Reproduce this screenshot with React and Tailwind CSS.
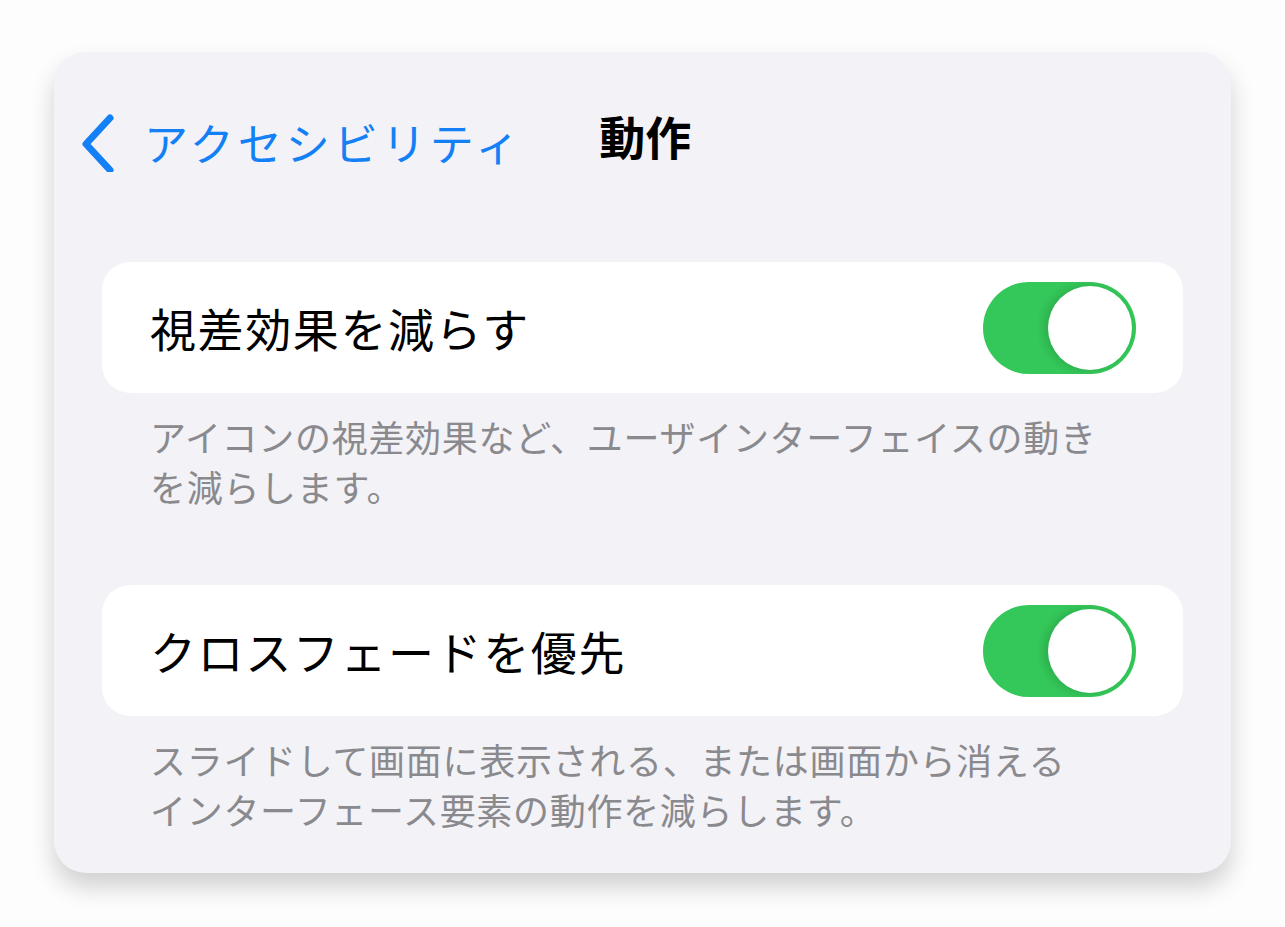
import React from "react";

function Toggle() {
  return (
    <div className="w-[153px] h-[92px] rounded-full bg-[#34c759] flex items-center justify-end pr-[4px]">
      <div className="w-[84px] h-[84px] rounded-full bg-white shadow-[-4px_0_8px_rgba(0,0,0,0.14)]" />
    </div>
  );
}

function Row({ label, note }) {
  return (
    <div>
      <div className="h-[131px] bg-white rounded-[28px] flex items-center justify-between pl-[48px] pr-[47px]">
        <span className="text-[46px] text-black tracking-[1.6px]">{label}</span>
        <Toggle />
      </div>
      <p className="px-[48px] pt-[18px] text-[36px] leading-[50px] text-[#8a8a8e] tracking-[0.7px]">{note}</p>
    </div>
  );
}

export default function App() {
  return (
    <div
      className="w-[1285px] h-[927px] bg-[#fdfdfd] pt-[52px] pl-[54px]"
      style={{ fontFamily: '"Noto Sans CJK JP", "Noto Sans", sans-serif' }}
    >
      <div className="w-[1177px] h-[821px] bg-[#f2f2f7] rounded-[32px] shadow-[0_14px_24px_rgba(0,0,0,0.18)] px-[48px]">
        {/* nav bar */}
        <div className="h-[210px] flex items-start pt-[60px]">
          <div className="flex items-center -ml-[24px]">
            <svg width="40" height="60" viewBox="0 0 40 60" className="mr-[26px]">
              <path d="M32 6 L8 32 L32 58" fill="none" stroke="#1480f5" strokeWidth="7" strokeLinecap="round" strokeLinejoin="round" />
            </svg>
            <span className="text-[44px] leading-none text-[#1480f5] tracking-[4px]">アクセシビリティ</span>
          </div>
          <span className="ml-[76px] text-[46px] leading-none font-bold text-black">動作</span>
        </div>

        <div className="flex flex-col gap-[74px]">
          <Row
            label="視差効果を減らす"
            note={<>アイコンの視差効果など、ユーザインターフェイスの動き<br />を減らします。</>}
          />
          <Row
            label="クロスフェードを優先"
            note={<>スライドして画面に表示される、または画面から消える<br />インターフェース要素の動作を減らします。</>}
          />
        </div>
      </div>
    </div>
  );
}
